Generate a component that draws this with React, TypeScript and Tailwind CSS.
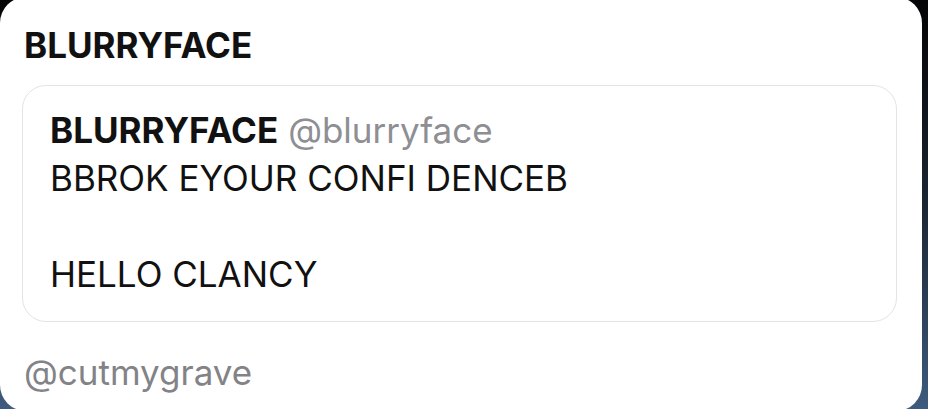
export default function App() {
  return (
    <div className="h-[409px] w-[928px] overflow-hidden bg-gradient-to-b from-[#050506] via-[#1b2634] to-[#3e5c7e]">
      <div className="-mt-[3px] h-[414px] w-[922px] rounded-[26px] bg-white pl-[24px] pr-[25px] pt-[27px] font-['Inter',sans-serif] text-[35px] text-[#111]">
        <h1 className="leading-[42px] font-bold">BLURRYFACE</h1>

        {/* quoted post */}
        <div className="-ml-[2px] mt-[19px] h-[237px] rounded-[24px] border border-[#e4e4e7] pl-[27px] pt-[20px]">
          <p className="leading-[48px]">
            <span className="font-bold">BLURRYFACE</span>{" "}
            <span className="text-[#8e8e93]">@blurryface</span>
          </p>
          <p className="leading-[48px]">BBROK EYOUR CONFI DENCEB</p>
          <p className="mt-[48px] leading-[48px]">HELLO CLANCY</p>
        </div>

        <p className="mt-[29px] leading-[42px] text-[#838387]">@cutmygrave</p>
      </div>
    </div>
  )
}
